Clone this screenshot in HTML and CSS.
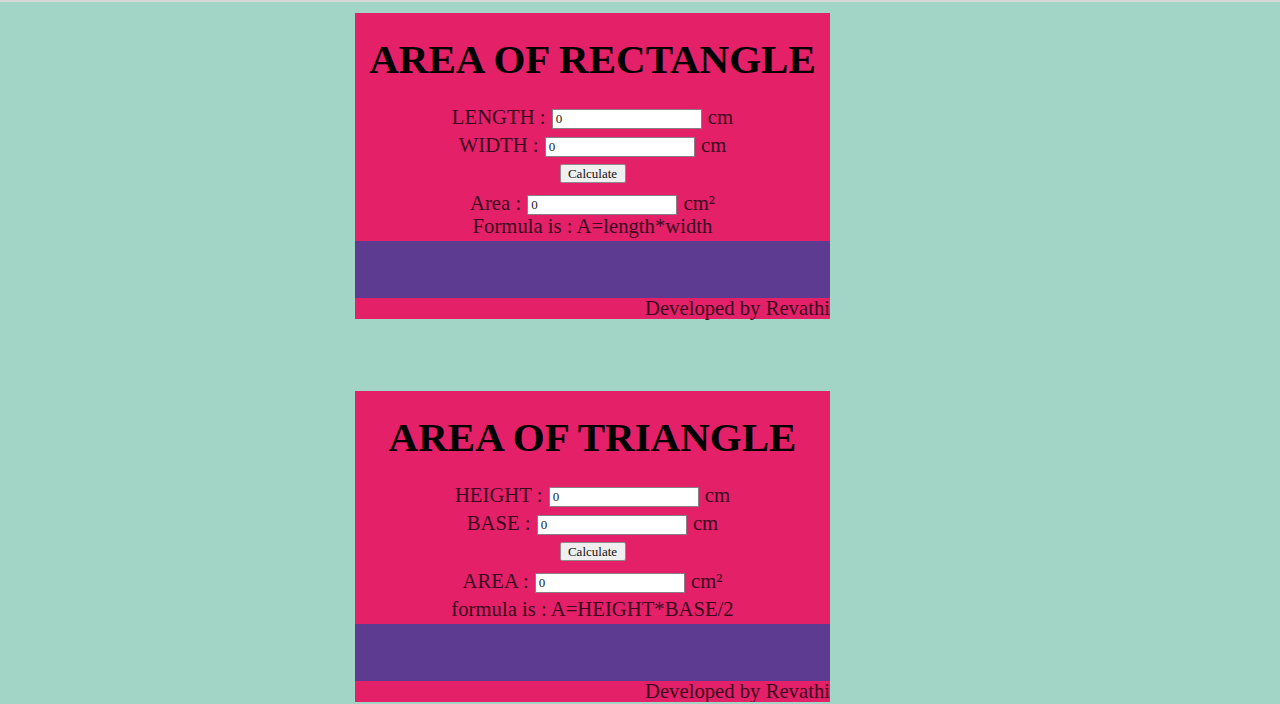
FILE: index.html
```html
<!DOCTYPE html>
<html>
<head>
<meta charset="utf-8">
<title>Area Calculator</title>
<link rel="stylesheet" href="styles.css">
</head>
<body>
<div class="page">
  <section class="card">
    <h1 class="title">AREA OF RECTANGLE</h1>
    <div class="row">LENGTH : <input class="field" type="text" value="0"> cm</div>
    <div class="row">WIDTH : <input class="field" type="text" value="0"> cm</div>
    <div class="row"><button class="btn" type="button">Calculate</button></div>
    <div class="row area">Area : <input class="field" type="text" value="0"> cm²</div>
    <div class="formula">Formula is : A=length*width</div>
    <div class="band"></div>
    <div class="footer">Developed by Revathi</div>
  </section>

  <section class="card">
    <h1 class="title">AREA OF TRIANGLE</h1>
    <div class="row">HEIGHT : <input class="field" type="text" value="0"> cm</div>
    <div class="row">BASE : <input class="field" type="text" value="0"> cm</div>
    <div class="row"><button class="btn" type="button">Calculate</button></div>
    <div class="row area">AREA : <input class="field" type="text" value="0"> cm²</div>
    <div class="formula formula-low">formula is : A=HEIGHT*BASE/2</div>
    <div class="band"></div>
    <div class="footer">Developed by Revathi</div>
  </section>
</div>
</body>
</html>
```

FILE: styles.css
```css
html {
  border-top: 2px solid #d6d6d6;
  background: #a3d5c7;
}

body {
  margin: 0;
  font-family: "Liberation Serif", "Times New Roman", serif;
  font-size: 20.7px;
  color: #3a0a1e;
}

.page {
  display: flex;
  flex-direction: column;
  gap: 72px;
  padding: 11px 0 0 355px;
}

.card {
  width: 475px;
  background: #e32068;
  text-align: center;
}

.title {
  margin: 23px 0 21px;
  font-size: 41px;
  line-height: 46px;
  font-weight: bold;
  color: #000;
}

.row {
  height: 28px;
  line-height: 28px;
  display: flex;
  align-items: center;
  justify-content: center;
  white-space: pre;
}

.row.area {
  margin-top: 3px;
  height: 26px;
}

.field {
  box-sizing: border-box;
  width: 150px;
  height: 20px;
  margin: 4px 1px 0;
  padding: 1px 3px;
  border: 1px solid #8a7d84;
  background: #fff;
  font-family: "Liberation Serif", serif;
  font-size: 13px;
  color: #222;
}

.btn {
  box-sizing: border-box;
  width: 66px;
  height: 19px;
  padding: 0;
  border: 1px solid #8d8d8d;
  border-radius: 2px;
  background: #efefef;
  font-family: "Liberation Serif", serif;
  font-size: 13px;
  line-height: 17px;
  color: #111;
}

.formula {
  line-height: 20px;
}

.formula-low {
  margin-top: 5px;
}

.band {
  margin-top: 5px;
  height: 57px;
  background: #5c3b91;
}

.footer {
  text-align: right;
  line-height: 21px;
  height: 21px;
}
```
